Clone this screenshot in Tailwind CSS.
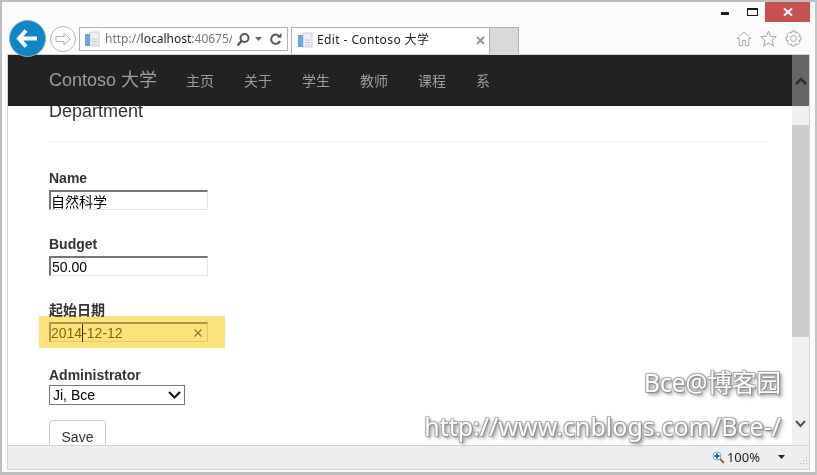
<!DOCTYPE html>
<html lang="en">
<head>
    <meta charset="UTF-8">
    <title>Edit - Contoso 大学</title>
    <script src="https://cdn.jsdelivr.net/npm/@tailwindcss/browser@4"></script>
</head>
<body class="w-[817px] h-[475px] overflow-hidden bg-white">
<div class="relative w-[817px] h-[475px] flex flex-col border-2 border-b-[3px] border-[#bdbdbd] border-r-[#c4c4c4] bg-[#fbfbfb] font-['Noto_Sans','Noto_Sans_CJK_SC',sans-serif]">

    <!-- browser chrome -->
    <div class="relative h-[52px] shrink-0">
        <div class="absolute right-[5px] top-0 flex items-start">
            <svg width="8" height="3" class="mt-[10px] mr-[18px]"><rect width="8" height="3" fill="#1a1a1a"/></svg>
            <svg width="11" height="8" class="mt-[6px] mr-[7px]"><rect x=".5" y=".5" width="10" height="7" fill="none" stroke="#1a1a1a"/><rect width="11" height="2" fill="#1a1a1a"/></svg>
            <div class="w-[45px] h-[20px] bg-[#c75050] flex items-center justify-center">
                <svg width="10" height="10" viewBox="0 0 10 10"><path d="M1 1.5 L9 8.5 M9 1.5 L1 8.5" stroke="#fff" stroke-width="2"/></svg>
            </div>
        </div>

        <div class="absolute left-[7px] top-[18px] w-[37px] h-[37px] rounded-full bg-[#0b86c8] border border-[#8fa9b8] flex items-center justify-center z-20">
            <svg width="23" height="21" viewBox="0 0 23 21"><path d="M10 2.5 L3 10.5 L10 18.5 M3.5 10.5 H21" fill="none" stroke="#fff" stroke-width="4"/></svg>
        </div>

        <div class="absolute left-[48px] top-[24px] w-[26px] h-[26px] rounded-full border border-[#b5b5b5] bg-white flex items-center justify-center">
            <svg width="16" height="14" viewBox="0 0 16 14"><path d="M9 1 L15 7 L9 13 V9.5 H1 V4.5 H9 Z" fill="none" stroke="#b5b5b5" stroke-width="1"/></svg>
        </div>

        <div class="absolute left-[77px] top-[25px] w-[209px] h-[24px] border border-[#b0b0b0] bg-white flex items-center pl-[4px] text-[12px]">
            <svg width="16" height="16" viewBox="0 0 16 16" class="shrink-0"><rect x="6" y="1" width="9" height="14" fill="#eef0f4" stroke="#c9cdd4"/><rect x="1" y="3" width="5" height="12" fill="#6aa7dc"/><path d="M8 8h5M8 10.500h5M8 13h5" stroke="#c5c9cf"/></svg>
            <span class="ml-[5px] w-[127px] overflow-hidden whitespace-nowrap text-[#777]">http://<span class="text-[#222]">localhost</span>:40675/</span>
            <svg width="15" height="15" viewBox="0 0 15 15" class="ml-[4px]"><circle cx="8.500" cy="6" r="4" fill="none" stroke="#555" stroke-width="2"/><path d="M5.500 9 L1.500 13.500" stroke="#555" stroke-width="2.500"/></svg>
            <svg width="8" height="5" class="ml-[4px]"><path d="M0 0 H7 L3.500 4 Z" fill="#666"/></svg>
            <svg width="13" height="13" viewBox="0 0 13 13" class="ml-[6px]"><path d="M10.800 4 A4.600 4.600 0 1 0 11 8" fill="none" stroke="#555" stroke-width="2"/><path d="M8 4.500 H12.500 V0 Z" fill="#555"/></svg>
        </div>

        <div class="absolute left-[289px] top-[25px] h-[27px] flex">
            <div class="w-[199px] border border-b-0 border-[#b0b0b0] bg-white flex items-center pl-[5px] pb-[2px] text-[12px] text-[#222]">
                <svg width="16" height="16" viewBox="0 0 16 16" class="shrink-0"><rect x="6" y="1" width="9" height="14" fill="#eef0f4" stroke="#c9cdd4"/><rect x="1" y="3" width="5" height="12" fill="#6aa7dc"/><path d="M8 8h5M8 10.500h5M8 13h5" stroke="#c5c9cf"/></svg>
                <span class="ml-[4px] tracking-[0.4px]">Edit - Contoso 大学</span>
                <svg width="9" height="9" viewBox="0 0 9 9" class="ml-auto mr-[4px]"><path d="M1 1 L8 8 M8 1 L1 8" stroke="#999" stroke-width="2"/></svg>
            </div>
            <div class="w-[29px] border border-l-0 border-b-0 border-[#b0b0b0] bg-[#d9d9d9]"></div>
        </div>

        <div class="absolute right-[13px] top-[28px] flex items-center gap-[8px]">
            <svg width="16" height="17" viewBox="0 0 17 17"><path d="M1 8.500 L8.500 1.500 L16 8.500 H13.500 V16 H10 V10.500 H7 V16 H3.500 V8.500 Z" fill="#fff" stroke="#a3a3a3"/></svg>
            <svg width="17" height="17" viewBox="0 0 17 17"><path d="M8.500 1 L10.700 6.300 L16.300 6.700 L12 10.300 L13.400 16 L8.500 13 L3.600 16 L5 10.300 L.7 6.700 L6.300 6.300 Z" fill="#fff" stroke="#a3a3a3"/></svg>
            <svg width="17" height="17" viewBox="0 0 17 17"><circle cx="8.500" cy="8.500" r="3" fill="none" stroke="#a3a3a3"/><path d="M7 1 H10 L10.500 3 L12.500 2.200 L14.800 4.500 L14 6.500 L16 7 V10 L14 10.500 L14.800 12.500 L12.500 14.800 L10.500 14 L10 16 H7 L6.500 14 L4.500 14.800 L2.200 12.500 L3 10.500 L1 10 V7 L3 6.500 L2.200 4.500 L4.500 2.200 L6.500 3 Z" fill="none" stroke="#a3a3a3"/></svg>
        </div>
    </div>

    <!-- page viewport -->
    <div class="relative flex-1 min-h-0 mx-[5px] flex overflow-hidden bg-white border-t border-x border-[#d4d4d4]">
        <div class="flex-1 overflow-hidden pl-[41px] pr-[24px] font-['Liberation_Sans','Noto_Sans_CJK_SC',sans-serif] text-[#333]">
            <h2 class="mt-[46px] h-[41px] text-[18px] leading-[20px] border-b border-[#eee]">Department</h2>

            <label class="block mt-[28px] text-[14px] leading-[16px] font-bold">Name</label>
            <div class="mt-[4px] w-[159px] h-[20px] border-2 border-[#e3e3e3] border-t-[#767676] border-l-[#767676] border-r border-b bg-white text-[14px] leading-[18px] text-black font-['Noto_Sans_CJK_SC',sans-serif]">自然科学</div>

            <label class="block mt-[26px] text-[14px] leading-[16px] font-bold">Budget</label>
            <div class="mt-[4px] w-[159px] h-[20px] border-2 border-[#e3e3e3] border-t-[#767676] border-l-[#767676] border-r border-b bg-white text-[14px] leading-[18px] pl-px text-black">50.00</div>

            <label class="block mt-[25px] text-[14px] leading-[16px] font-bold font-['Noto_Sans_CJK_SC',sans-serif]">起始日期</label>
            <div class="relative mt-[5px] w-[159px] h-[20px] border-2 border-[#e3e3e3] border-t-[#a8a8a8] border-l-[#a8a8a8] border-r border-b bg-white text-[14px] leading-[18px] text-[#857222] flex items-center">
                <span>2014-12-12</span>
                <svg width="8" height="8" viewBox="0 0 8 8" class="ml-auto mr-[5px]"><path d="M.5 .5 L7.500 7.500 M7.500 .5 L.5 7.500" stroke="#8a8a8a" stroke-width="1.200"/></svg>
                <div class="absolute left-[31px] top-0 w-px h-[18px] bg-[#333]"></div>
            </div>

            <label class="block mt-[25px] text-[14px] leading-[16px] font-bold">Administrator</label>
            <div class="mt-[2px] w-[136px] h-[20px] border border-[#767676] bg-white text-[14px] leading-[18px] pl-[3px] text-black flex items-center justify-between pr-[3px]">
                <span>Ji, Bce</span>
                <svg width="13" height="8" viewBox="0 0 13 8"><path d="M1 1 L6.500 6.500 L12 1" fill="none" stroke="#111" stroke-width="2"/></svg>
            </div>

            <button class="mt-[15px] w-[57px] h-[34px] border border-[#ccc] rounded-[4px] bg-white text-[14px] text-[#333]">Save</button>
        </div>

        <!-- scrollbar -->
        <div class="w-[17px] shrink-0 bg-[#f0f0f0] flex flex-col">
            <div class="h-[70px] shrink-0"></div>
            <div class="h-[212px] shrink-0 bg-[#cdcdcd]"></div>
            <div class="mt-auto h-[17px] flex items-center justify-center mb-[13px]">
                <svg width="11" height="8" viewBox="0 0 11 8"><path d="M1 1 L5.500 6 L10 1" fill="none" stroke="#505050" stroke-width="2"/></svg>
            </div>
        </div>

        <!-- navbar, fixed over the page -->
        <div class="absolute left-0 right-0 top-0 h-[51px] bg-[#222] flex items-center pl-[41px] pr-0 font-['Liberation_Sans','Noto_Sans_CJK_SC',sans-serif] text-[#9d9d9d]">
            <span class="text-[18px] w-[137px] shrink-0">Contoso 大学</span>
            <div class="flex text-[14px] gap-[30px] font-['Noto_Sans_CJK_SC',sans-serif]">
                <span class="w-[28px]">主页</span>
                <span class="w-[28px]">关于</span>
                <span class="w-[28px]">学生</span>
                <span class="w-[28px]">教师</span>
                <span class="w-[28px]">课程</span>
                <span>系</span>
            </div>
            <div class="ml-auto w-[17px] h-full bg-[#666] flex items-center justify-center">
                <svg width="12" height="8" viewBox="0 0 12 8"><path d="M1 7 L6 2 L11 7" fill="none" stroke="#2a2a2a" stroke-width="2.500"/></svg>
            </div>
        </div>
    </div>

    <!-- status bar -->
    <div class="h-[25px] shrink-0 mx-[5px] mb-[2px] bg-[#eeeeee] border border-[#d4d4d4] flex items-center justify-end text-[13px] text-[#222]">
        <svg width="13" height="13" viewBox="0 0 13 13"><circle cx="5" cy="5" r="4" fill="#fff" stroke="#7da2c4"/><path d="M2.500 5 H7.500 M5 2.500 V7.500" stroke="#0a6fc2" stroke-width="2"/><path d="M8 8 L12 12" stroke="#a0642a" stroke-width="2"/></svg>
        <span class="ml-[2px]">100%</span>
        <svg width="8" height="5" class="ml-[18px]"><path d="M0 0 H7 L3.500 4 Z" fill="#222"/></svg>
        <svg width="10" height="10" viewBox="0 0 10 10" class="ml-[12px] mr-px mt-[6px]"><path d="M8 1h1v1H8zM5 4h1v1H5zM8 4h1v1H8zM2 7h1v1H2zM5 7h1v1H5zM8 7h1v1H8z" fill="#b5b5b5"/></svg>
    </div>

    <!-- annotation highlight and blog watermark, laid over the screenshot -->
    <div class="absolute left-[37px] top-[314px] w-[186px] h-[32px] bg-[#fde27a] mix-blend-multiply z-10"></div>
    <div class="absolute right-[34px] top-[367px] z-10 text-[24.500px] leading-[28px] text-white font-['Noto_Sans','Noto_Sans_CJK_SC',sans-serif] [text-shadow:1px_1px_1px_#888,-1px_-1px_1px_#aaa,1px_-1px_1px_#aaa,-1px_1px_1px_#aaa,2px_2px_3px_#999,3px_3px_4px_#bbb]">Bce@博客园</div>
    <div class="absolute right-[34px] top-[408px] z-10 text-[25px] leading-[32px] whitespace-nowrap text-white font-['Noto_Sans',sans-serif] [text-shadow:1px_1px_1px_#888,-1px_-1px_1px_#aaa,1px_-1px_1px_#aaa,-1px_1px_1px_#aaa,2px_2px_3px_#999,3px_3px_4px_#bbb]">http://www.cnblogs.com/Bce-/</div>
</div>
</body>
</html>
